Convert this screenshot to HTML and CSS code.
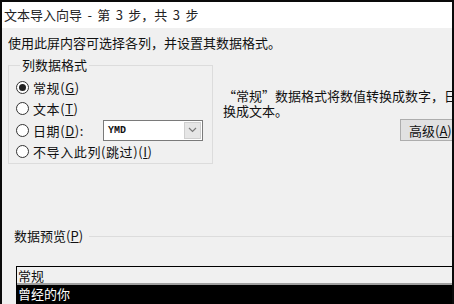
FILE: index.html
```html
<!DOCTYPE html>
<html lang="zh-CN">
<head>
    <meta charset="UTF-8">
    <title>文本导入向导 - 第 3 步，共 3 步</title>
    <link rel="stylesheet" href="styles.css">
</head>
<body>
    <div class="frame">
        <div class="titlebar">文本导入向导 - 第 3 步，共 3 步</div>
        <div class="content">
            <p class="intro">使用此屏内容可选择各列，并设置其数据格式。</p>
            <div class="row">
                <fieldset class="group">
                    <legend>列数据格式</legend>
                    <div class="option"><span class="radio checked"></span>常规(<u>G</u>)</div>
                    <div class="option"><span class="radio"></span>文本(<u>T</u>)</div>
                    <div class="option date">
                        <span class="radio"></span>日期(<u>D</u>):
                        <div class="combo">
                            <span class="combo-value">YMD</span>
                            <span class="combo-btn">
                                <svg width="9" height="6" viewBox="0 0 9 6"><path d="M1 1 L4.5 4.5 L8 1" fill="none" stroke="#7a7a7a" stroke-width="1.2"/></svg>
                            </span>
                        </div>
                    </div>
                    <div class="option"><span class="radio"></span>不导入此列(跳过)(<u>I</u>)</div>
                </fieldset>
                <div class="side">
                    <p class="desc">“常规”数据格式将数值转换成数字，日期值会转换成日期，其余数据则转<br>换成文本。</p>
                    <button class="btn">高级(<u>A</u>)...</button>
                </div>
            </div>
            <div class="preview-label"><span>数据预览(<u>P</u>)</span><span class="rule"></span></div>
            <div class="preview">
                <div class="preview-head">常规</div>
                <div class="preview-row">曾经的你</div>
            </div>
        </div>
    </div>
</body>
</html>
```

FILE: styles.css
```css
* {
    margin: 0;
    padding: 0;
    box-sizing: border-box;
}

body {
    width: 454px;
    height: 304px;
    overflow: hidden;
    background-color: #0a0a0a;
    font-family: "Noto Sans CJK SC", "Liberation Sans", sans-serif;
    font-size: 13px;
    color: #111;
}

.frame {
    height: 304px;
    margin: 2px 2px 0 2px;
    background-color: #f0f0f0;
    overflow: hidden;
}

.titlebar {
    height: 26px;
    line-height: 26px;
    padding-left: 2px;
    background-color: #fff;
    color: #222;
    word-spacing: 2.5px;
    white-space: nowrap;
}

.content {
    padding-left: 6px;
}

.intro {
    margin-top: 7px;
    line-height: 16px;
    white-space: nowrap;
}

.row {
    display: flex;
    margin-top: 6px;
}

.group {
    width: 205px;
    flex-shrink: 0;
    border: 1px solid #dcdcdc;
    padding: 4px 0 1px 7px;
}

.group legend {
    margin-left: 4px;
    padding: 0 2px;
    line-height: 16px;
}

.option {
    display: flex;
    align-items: center;
    height: 21px;
    letter-spacing: 0.6px;
    white-space: nowrap;
}

.option.date {
    height: 22px;
}

.radio {
    width: 13px;
    height: 13px;
    margin-right: 4px;
    border: 1px solid #333;
    border-radius: 50%;
    background-color: #fff;
    position: relative;
}

.radio.checked::after {
    content: "";
    position: absolute;
    left: 2px;
    top: 2px;
    width: 7px;
    height: 7px;
    border-radius: 50%;
    background-color: #222;
}

.combo {
    display: flex;
    width: 100px;
    height: 21px;
    margin-left: 19px;
    border: 1px solid #7a7a7a;
    background-color: #fff;
    letter-spacing: 0;
}

.combo-value {
    flex: 1;
    padding-left: 4px;
    font-family: "Liberation Mono", monospace;
    font-size: 10px;
    font-weight: bold;
    line-height: 19px;
}

.combo-btn {
    display: flex;
    align-items: center;
    justify-content: center;
    width: 17px;
    margin: 1px;
    border: 1px solid #cfcfcf;
    background-color: #e6e6e6;
}

.side {
    padding: 31px 0 0 10px;
    white-space: nowrap;
}

.desc {
    line-height: 15px;
}

.btn {
    display: block;
    margin: 1px 0 0 177px;
    width: 75px;
    height: 22px;
    padding-left: 8px;
    text-align: left;
    border: 1px solid #adadad;
    background-color: #e1e1e1;
    font: inherit;
    color: #111;
}

.preview-label {
    display: flex;
    align-items: center;
    margin: 64px 0 0 6px;
    line-height: 16px;
    white-space: nowrap;
}

.preview-label .rule {
    flex: 1;
    height: 1px;
    margin-left: 6px;
    background-color: #dcdcdc;
}

.preview {
    margin: 22px 0 0 8px;
    border-top: 1px solid #000;
    border-left: 1px solid #000;
}

.preview-head {
    height: 18px;
    line-height: 17px;
    padding-left: 1px;
    border-bottom: 2px solid #a0a0a0;
}

.preview-row {
    height: 20px;
    line-height: 18px;
    padding-left: 1px;
    background-color: #000;
    color: #fff;
}
```
